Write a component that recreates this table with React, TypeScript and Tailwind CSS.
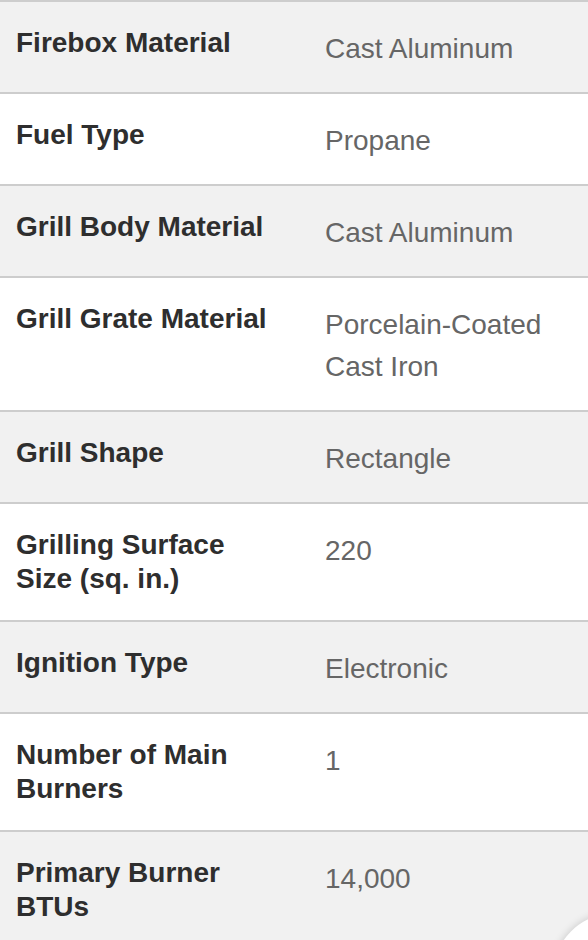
import React from "react";

const rows: { label: string; value: string }[] = [
  { label: "Firebox Material", value: "Cast Aluminum" },
  { label: "Fuel Type", value: "Propane" },
  { label: "Grill Body Material", value: "Cast Aluminum" },
  { label: "Grill Grate Material", value: "Porcelain-Coated Cast Iron" },
  { label: "Grill Shape", value: "Rectangle" },
  { label: "Grilling Surface Size (sq. in.)", value: "220" },
  { label: "Ignition Type", value: "Electronic" },
  { label: "Number of Main Burners", value: "1" },
  { label: "Primary Burner BTUs", value: "14,000" },
];

export default function App() {
  return (
    <div
      className="relative w-[588px] h-[940px] overflow-hidden bg-white"
      style={{ fontFamily: '"Liberation Sans", Arial, Helvetica, sans-serif' }}
    >
      <div className="flex flex-col">
        {rows.map((r, i) => (
          <div
            key={r.label}
            className={`grid grid-cols-[309px_1fr] border-t-2 border-[#cdcdcd] ${
              i % 2 === 0 ? "bg-[#f1f1f1]" : "bg-white"
            }`}
          >
            <div className="pl-4 pr-[33px] pt-[24px] pb-[24px] text-[28px] leading-[34px] font-bold text-[#2e2e2e]">
              {r.label}
            </div>
            <div className="pl-4 pr-4 pt-[26px] pb-[22px] text-[28px] leading-[42px] text-[#666666]">
              {r.value}
            </div>
          </div>
        ))}
      </div>
      <div className="absolute left-[553px] top-[913px] w-[124px] h-[124px] rounded-full bg-white shadow-[0_0_8px_rgba(0,0,0,0.18)]" />
    </div>
  );
}
